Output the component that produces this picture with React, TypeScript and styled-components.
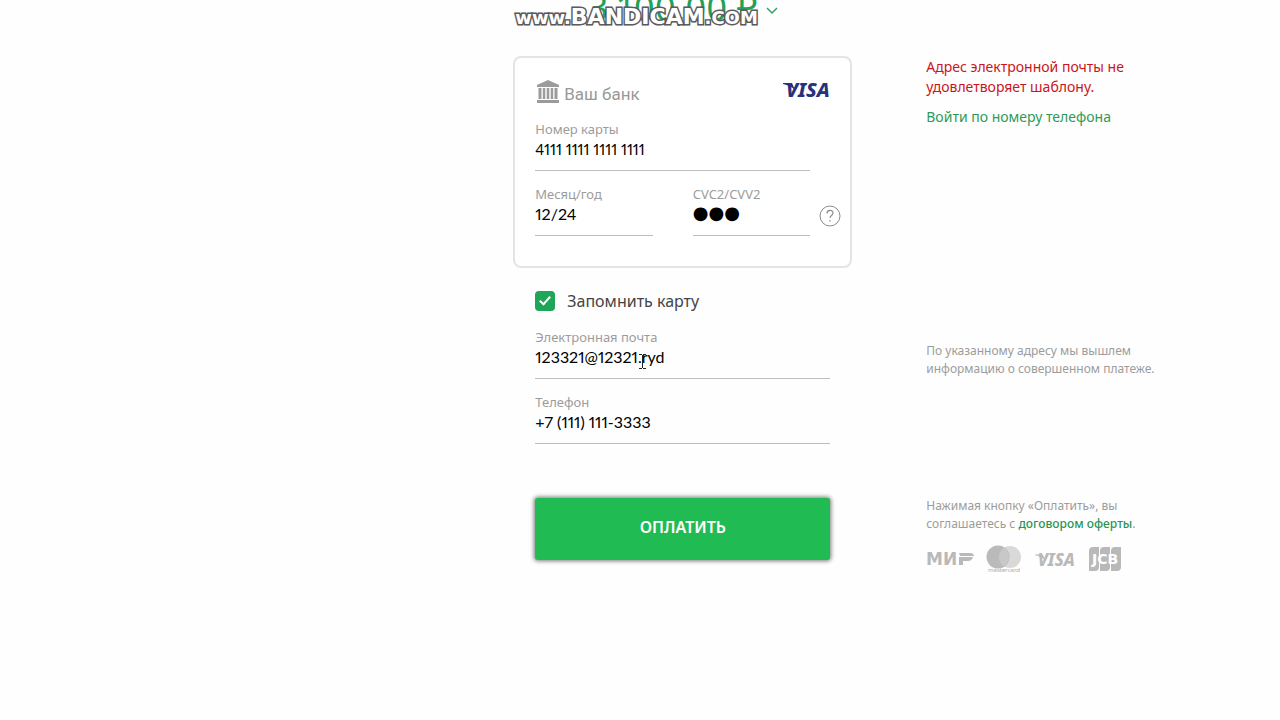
import React from 'react';
import styled, { createGlobalStyle } from 'styled-components';

const GlobalStyle = createGlobalStyle`
  *, *::before, *::after { box-sizing: border-box; }
  body {
    margin: 0;
    background: #fefefe;
    font-family: "Noto Sans", "Open Sans", sans-serif;
    color: #000;
  }
`;

const Page = styled.main`
  display: grid;
  grid-template-columns: minmax(0, 6fr) 339px minmax(0, 5fr);
  overflow: hidden;
`;

const Form = styled.form`
  display: contents;
`;

const Main = styled.div<{ $inset?: boolean }>`
  grid-column: 2;
  padding: ${(p) => (p.$inset ? '0 22px' : '0')};
`;

const Aside = styled.aside<{ $top: number }>`
  grid-column: 3;
  padding: ${(p) => p.$top}px 16px 0 74px;
`;

const AmountBar = styled.header`
  position: relative;
  grid-column: 2;
  height: 56px;
`;

const Amount = styled.button`
  display: flex;
  align-items: center;
  justify-content: center;
  gap: 8px;
  width: 100%;
  margin-top: -12px;
  padding: 0;
  border: 0;
  background: none;
  color: #22a05a;
  font-family: "Noto Sans", sans-serif;
  font-size: 36px;
  font-weight: 400;
  font-variant-numeric: proportional-nums;
  line-height: 40px;
`;

const Chevron = styled.svg`
  margin-top: 6px;
`;

const Watermark = styled.div`
  position: absolute;
  top: 4px;
  left: 2px;
  display: flex;
  align-items: baseline;
  font-family: "DejaVu Sans", sans-serif;
  font-weight: 700;
  line-height: 26px;
  color: #fff;
  paint-order: stroke fill;
  -webkit-text-stroke: 3px #555;
  text-shadow: 0 0 2px #777;
  pointer-events: none;
`;

const MarkPart = styled.span<{ $size: number }>`
  font-size: ${(p) => p.$size}px;
`;

const Card = styled.section`
  padding: 20px 8px 30px 20px;
  border: 2px solid #e4e4e4;
  border-radius: 8px;
  background: #fff;
`;

const CardHead = styled.div`
  display: flex;
  align-items: flex-start;
  gap: 4px;
  height: 30px;
  margin-bottom: 13px;
  padding: 1px 10px 0 0;
`;

const BankName = styled.span`
  flex: 1;
  margin-top: 3px;
  color: #999;
  font-family: Roboto, sans-serif;
  font-size: 17px;
  line-height: 24px;
`;

const Field = styled.label`
  display: flex;
  flex: 1;
  flex-direction: column;
  min-width: 0;
  height: 50px;
  border-bottom: 1px solid #bdbdbd;
`;

const FieldLabel = styled.span`
  color: #9c9c9c;
  font-size: 13px;
  line-height: 16px;
`;

const Input = styled.input`
  width: 100%;
  height: 24px;
  padding: 0;
  border: 0;
  outline: 0;
  background: none;
  color: #000;
  font-family: Lato, sans-serif;
  font-size: 16px;
  font-variant-numeric: proportional-nums;
  line-height: 24px;
`;

const CardNumberInput = styled(Input)`
  font-size: 15px;
`;

const MaskedInput = styled(Input)`
  height: 22px;
  font-family: "DejaVu Sans", sans-serif;
  font-size: 18px;
`;

const NumberRow = styled.div`
  display: flex;
  margin-bottom: 15px;
  padding-right: 32px;
`;

const CodeRow = styled.div`
  display: grid;
  grid-template-columns: 1fr 1fr;
  column-gap: 40px;
  padding-right: 32px;
`;

const CodeGroup = styled.div`
  display: flex;
  align-items: flex-end;
  margin-right: -31px;
`;

const HelpButton = styled.button`
  flex: none;
  width: 22px;
  height: 22px;
  margin: 0 0 9px 9px;
  padding: 0;
  border: 0;
  background: none;
  line-height: 0;
`;

const Remember = styled.label`
  display: flex;
  align-items: center;
  gap: 12px;
  margin: 22px 0 17px;
  color: #444;
  font-size: 16px;
  line-height: 22px;
`;

const Tick = styled.input`
  display: grid;
  place-items: center;
  width: 20px;
  height: 20px;
  margin: 0;
  border-radius: 4px;
  appearance: none;
  background: #1fa557;

  &:checked::before {
    content: "";
    width: 6px;
    height: 11px;
    margin-bottom: 3px;
    border: solid #fff;
    border-width: 0 2px 2px 0;
    transform: rotate(42deg);
  }
`;

const EmailBox = styled.div`
  position: relative;
`;

const TextCursor = styled.svg`
  position: absolute;
  top: 25px;
  left: 104px;
  pointer-events: none;
`;

const PhoneBox = styled.div`
  margin: 15px 0 52px;
`;

const PayButton = styled.button`
  display: block;
  width: 100%;
  height: 62px;
  margin-top: 2px;
  padding: 0 0 4px;
  border: 0;
  border-radius: 3px;
  background: #20bb53;
  box-shadow: 0 0 4px 1px #777;
  color: #fff;
  font-family: "Noto Sans", sans-serif;
  font-size: 16px;
  font-weight: 600;
`;

const ErrorText = styled.p`
  max-width: 220px;
  margin: 0 0 10px;
  color: #cb1420;
  font-size: 14px;
  line-height: 20px;
`;

const LoginLink = styled.a`
  display: block;
  color: #2f9a58;
  font-size: 14px;
  line-height: 20px;
  text-decoration: none;
`;

const Hint = styled.p`
  max-width: 240px;
  margin: 0;
  color: #9c9c9c;
  font-size: 12px;
  line-height: 18px;
`;

const OfferLink = styled.a`
  color: #2a9553;
  font-weight: 500;
  text-decoration: none;
`;

const Systems = styled.div`
  display: flex;
  align-items: center;
  gap: 12px;
  margin-top: 12px;
`;

function BankIcon() {
  return (
    <svg width="25" height="26" viewBox="0 0 25 26" fill="#9b9b9b" aria-hidden="true">
      <path d="M13 1 24 6v2H2V6z" />
      <path d="M3.500 9h3v11h-3zM7.800 9h2.500v11H7.800zM11.700 9h2.600v11h-2.600zM15.700 9h2.500v11h-2.500zM19.500 9h3v11h-3z" />
      <path d="M2 21h22v3H2z" />
    </svg>
  );
}

function VisaLogo({ color, small }: { color: string; small?: boolean }) {
  return (
    <svg width={small ? 43 : 50} height={small ? 17 : 20} viewBox="0 0 50 20" overflow="visible" role="img" aria-label="Visa">
      <path d="M1 4h9l3 7C10 8 6 6 1 5z" fill={color} />
      <text x="4" y="18" fill={color} fontFamily="Noto Sans" fontSize="20" fontWeight="800" fontStyle="italic">VISA</text>
    </svg>
  );
}

function MirLogo() {
  return (
    <svg width="48" height="20" viewBox="0 0 48 20" role="img" aria-label="МИР">
      <text x="0" y="16" fill="#b9b9b9" fontFamily="DejaVu Sans" fontSize="17" fontWeight="700">МИ</text>
      <path d="M33 4h11q4 0 4 3H34zM33 8h14q-1 4-5 4h-5v4h-4z" fill="#b9b9b9" />
    </svg>
  );
}

function MastercardLogo() {
  return (
    <svg width="36" height="28" viewBox="0 0 36 28" role="img" aria-label="Mastercard">
      <circle cx="24" cy="12" r="11" fill="#d9d9d9" />
      <circle cx="12" cy="12" r="11.500" fill="#bababa" />
      <path d="M18 2.500a11.500 11.500 0 0 1 0 19 11.500 11.500 0 0 1 0-19z" fill="#c8c8c8" />
      <text x="18" y="27" textAnchor="middle" fill="#aaa" fontFamily="Noto Sans" fontSize="6">mastercard</text>
    </svg>
  );
}

function JcbLogo() {
  return (
    <svg width="32" height="24" viewBox="0 0 32 24" role="img" aria-label="JCB">
      <path d="M4 0h6v20q0 4-4 4H0V4q0-4 4-4zM15 0h6v20q0 4-4 4h-6V4q0-4 4-4zM26 0h6v20q0 4-4 4h-6V4q0-4 4-4z" fill="#b9b9b9" />
      <text x="16" y="17" textAnchor="middle" fill="#fff" fontFamily="DejaVu Sans" fontSize="14" fontWeight="700">JCB</text>
    </svg>
  );
}

export default function App() {
  return (
    <>
      <GlobalStyle />
      <Page>
        <AmountBar>
          <Amount type="button">
            3 100,00 ₽
            <Chevron width="12" height="8" viewBox="0 0 12 8" fill="none" stroke="#2fa46a" strokeWidth="1.500" aria-hidden="true">
              <path d="m1 1 5 5 5-5" />
            </Chevron>
          </Amount>
          <Watermark>
            <MarkPart $size={18}>www.</MarkPart>
            <MarkPart $size={22}>BANDICAM</MarkPart>
            <MarkPart $size={18}>.COM</MarkPart>
          </Watermark>
        </AmountBar>
        <Form onSubmit={(e) => e.preventDefault()}>
          <Main>
            <Card>
              <CardHead>
                <BankIcon />
                <BankName>Ваш банк</BankName>
                <VisaLogo color="#28327c" />
              </CardHead>
              <NumberRow>
                <Field>
                  <FieldLabel>Номер карты</FieldLabel>
                  <CardNumberInput defaultValue="4111 1111 1111 1111" inputMode="numeric" />
                </Field>
              </NumberRow>
              <CodeRow>
                <Field>
                  <FieldLabel>Месяц/год</FieldLabel>
                  <Input defaultValue="12/24" />
                </Field>
                <CodeGroup>
                  <Field>
                    <FieldLabel>CVC2/CVV2</FieldLabel>
                    <MaskedInput defaultValue="●●●" autoComplete="off" />
                  </Field>
                  <HelpButton type="button" aria-label="CVC2/CVV2">
                    <svg width="22" height="22" viewBox="0 0 22 22" fill="none" stroke="#8c8c8c">
                      <circle cx="11" cy="11" r="10" />
                      <path d="M8 8.500c0-4 6-4 6-.5 0 2.500-3 2.500-3 5M11 15v1.500" strokeWidth="1.200" />
                    </svg>
                  </HelpButton>
                </CodeGroup>
              </CodeRow>
            </Card>
          </Main>
          <Aside $top={1}>
            <ErrorText role="alert">Адрес электронной почты не удовлетворяет шаблону.</ErrorText>
            <LoginLink href="#phone">Войти по номеру телефона</LoginLink>
          </Aside>
          <Main $inset>
            <Remember>
              <Tick type="checkbox" defaultChecked />
              Запомнить карту
            </Remember>
          </Main>
          <Main $inset>
            <EmailBox>
              <Field>
                <FieldLabel>Электронная почта</FieldLabel>
                <Input type="email" defaultValue="123321@12321.ryd" />
              </Field>
              <TextCursor width="7" height="15" viewBox="0 0 7 15" fill="none" stroke="#222" aria-hidden="true">
                <path d="M0 .5h3m1 0h3M3.500 1v13M0 14.500h3m1 0h3" />
              </TextCursor>
            </EmailBox>
          </Main>
          <Aside $top={13}>
            <Hint>По указанному адресу мы вышлем информацию о совершенном платеже.</Hint>
          </Aside>
          <Main $inset>
            <PhoneBox>
              <Field>
                <FieldLabel>Телефон</FieldLabel>
                <Input type="tel" defaultValue="+7 (111) 111-3333" />
              </Field>
            </PhoneBox>
          </Main>
          <Main $inset>
            <PayButton type="submit">ОПЛАТИТЬ</PayButton>
          </Main>
          <Aside $top={1}>
            <Hint>
              Нажимая кнопку «Оплатить», вы соглашаетесь с <OfferLink href="#offer">договором оферты</OfferLink>.
            </Hint>
            <Systems>
              <MirLogo />
              <MastercardLogo />
              <VisaLogo color="#b9b9b9" small />
              <JcbLogo />
            </Systems>
          </Aside>
        </Form>
      </Page>
    </>
  );
}
